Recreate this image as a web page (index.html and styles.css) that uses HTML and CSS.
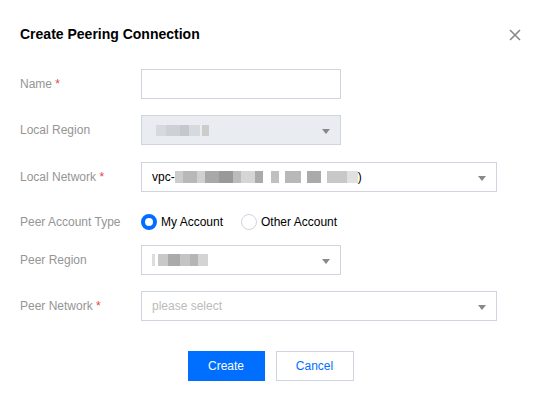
FILE: index.html
```html
<!DOCTYPE html>
<html lang="en">
<head>
    <meta charset="UTF-8">
    <title>Create Peering Connection</title>
    <link rel="stylesheet" href="styles.css">
</head>
<body>
    <div class="dialog">
        <div class="dialog-head">
            <h3>Create Peering Connection</h3>
            <button type="button" class="close" aria-label="Close">
                <svg width="12" height="12" viewBox="0 0 12 12"><path d="M1 1L11 11M11 1L1 11" stroke="#888" stroke-width="1.6"/></svg>
            </button>
        </div>

        <form class="form">
            <div class="row">
                <label>Name <span class="req">*</span></label>
                <div class="field short"></div>
            </div>

            <div class="row wide-gap">
                <label>Local Region</label>
                <div class="field short select disabled">
                    <span class="masked region-a"></span>
                </div>
            </div>

            <div class="row">
                <label>Local Network <span class="req">*</span></label>
                <div class="field select">
                    <span class="value">vpc-</span><span class="masked network"></span><span class="value">)</span>
                </div>
            </div>

            <div class="row radios">
                <label>Peer Account Type</label>
                <div class="radio-group">
                    <span class="radio checked"><i></i>My Account</span>
                    <span class="radio"><i></i>Other Account</span>
                </div>
            </div>

            <div class="row">
                <label>Peer Region</label>
                <div class="field short select">
                    <span class="masked region-b"></span>
                </div>
            </div>

            <div class="row">
                <label>Peer Network <span class="req">*</span></label>
                <div class="field select">
                    <span class="placeholder">please select</span>
                </div>
            </div>

            <div class="actions">
                <button type="button" class="btn primary">Create</button>
                <button type="button" class="btn">Cancel</button>
            </div>
        </form>
    </div>
</body>
</html>
```

FILE: styles.css
```css
body {
    font-family: "Liberation Sans", Arial, sans-serif;
    background: #fff;
    margin: 0;
    padding: 0;
}
.dialog {
    width: 542px;
    height: 401px;
    padding: 24px 20px 20px;
    box-sizing: border-box;
}
.dialog-head {
    display: flex;
    justify-content: space-between;
    align-items: center;
    height: 20px;
}
.dialog-head h3 {
    margin: 0;
    font-size: 14px;
    font-weight: bold;
    color: #000;
}
.close {
    border: none;
    background: none;
    padding: 0;
    margin-right: 1px;
    margin-top: 2px;
    width: 12px;
    height: 12px;
    display: flex;
}
.form {
    margin-top: 25px;
}
.row {
    display: flex;
    align-items: center;
    margin-bottom: 16px;
}
.row.wide-gap {
    margin-bottom: 17px;
}
.row label {
    width: 121px;
    flex: none;
    font-size: 12px;
    color: #959595;
}
.req {
    color: #e54545;
}
.field {
    width: 356px;
    height: 30px;
    border: 1px solid #cfd5de;
    box-sizing: border-box;
    display: flex;
    align-items: center;
    padding: 0 10px;
    position: relative;
    font-size: 12px;
    color: #000;
}
.field.short {
    width: 200px;
}
.field.disabled {
    background: #e9ecf0;
}
.select::after {
    content: "";
    position: absolute;
    right: 10px;
    top: 13px;
    border-left: 4px solid transparent;
    border-right: 4px solid transparent;
    border-top: 5px solid #888;
}
.placeholder {
    color: #bbb;
}
.masked {
    display: inline-block;
    height: 11px;
}
.region-a {
    width: 53px;
    margin-left: 4px;
    background: linear-gradient(90deg, #d6d9de 0 10px, #cdd0d5 10px 24px, #c4c7cc 24px 33px, #d6d9de 33px 44px, #e9ecf0 44px 46px, #ccc 46px 53px);
}
.region-b {
    width: 56px;
    height: 12px;
    background: linear-gradient(90deg, #ddd 0 3px, #fff 3px 6px, #c8c8c8 6px 16px, #aaa 16px 28px, #c4c4c4 28px 38px, #b5b5b5 38px 46px, #d4d4d4 46px 56px);
}
.network {
    width: 183px;
    height: 12px;
    background: linear-gradient(90deg, #ccc 0 8px, #b8b8b8 8px 22px, #d0d0d0 22px 30px, #a8a8a8 30px 44px, #999 44px 58px, #bbb 58px 66px, #d5d5d5 66px 80px, #aaa 80px 88px, #fff 88px 96px, #c0c0c0 96px 104px, #fff 104px 110px, #b8b8b8 110px 126px, #fff 126px 132px, #aaa 132px 146px, #fff 146px 152px, #c8c8c8 152px 172px, #e0e0e0 172px 183px);
}
.radios {
    height: 20px;
    margin-top: 20px;
    margin-bottom: 13px;
}
.radio-group {
    display: flex;
    align-items: center;
    gap: 18px;
    font-size: 12px;
    color: #000;
}
.radio {
    display: flex;
    align-items: center;
}
.radio i {
    width: 16px;
    height: 16px;
    border: 1px solid #cfd5de;
    border-radius: 50%;
    box-sizing: border-box;
    margin-right: 4px;
}
.radio.checked i {
    border: 4px solid #006eff;
}
.actions {
    display: flex;
    justify-content: center;
    gap: 11px;
    margin-top: 30px;
    padding-right: 1px;
}
.btn {
    width: 78px;
    height: 30px;
    border: 1px solid #cfd5de;
    background: #fff;
    color: #006eff;
    font-family: inherit;
    font-size: 12px;
    padding: 0;
}
.btn.primary {
    width: 77px;
    background: #006eff;
    border-color: #006eff;
    color: #fff;
}
```
